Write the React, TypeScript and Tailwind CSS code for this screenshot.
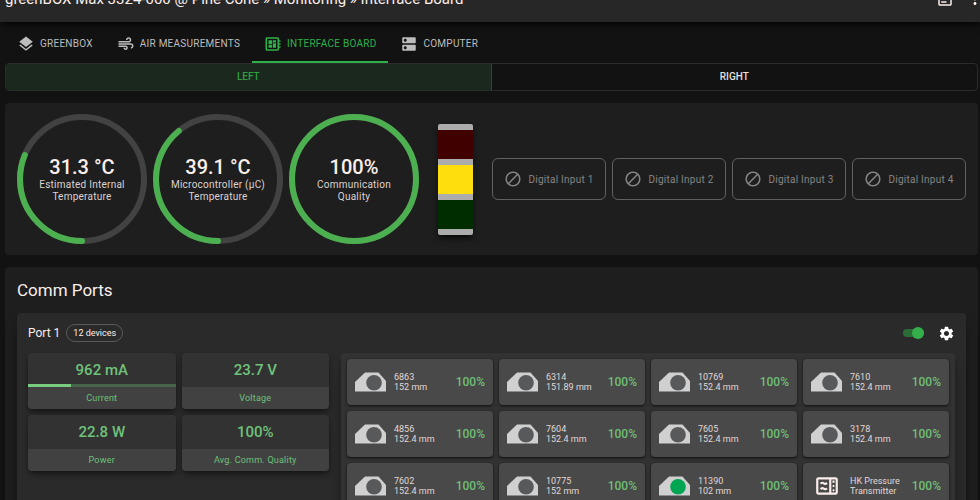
import { type ComponentType, useState } from "react";
import {
  MdAir,
  MdBlock,
  MdDeveloperBoard,
  MdDns,
  MdLayers,
  MdMoreVert,
  MdOutlineArticle,
  MdOutlineMicrowave,
  MdSettings,
} from "react-icons/md";

const tabs: { label: string; icon: ComponentType<{ className?: string }>; active?: boolean }[] = [
  { label: "GREENBOX", icon: MdLayers },
  { label: "AIR MEASUREMENTS", icon: MdAir },
  { label: "INTERFACE BOARD", icon: MdDeveloperBoard, active: true },
  { label: "COMPUTER", icon: MdDns },
];

const gauges = [
  { value: "31.3 °C", label: "Estimated Internal Temperature", percent: 31.3 },
  { value: "39.1 °C", label: "Microcontroller (µC) Temperature", percent: 39.1 },
  { value: "100%", label: "Communication Quality", percent: 100 },
];

const digitalInputs = ["Digital Input 1", "Digital Input 2", "Digital Input 3", "Digital Input 4"];

const stats = [
  { value: "962 mA", label: "Current", progress: 29 },
  { value: "23.7 V", label: "Voltage" },
  { value: "22.8 W", label: "Power" },
  { value: "100%", label: "Avg. Comm. Quality" },
];

const devices = [
  { name: "6863", detail: "152 mm" },
  { name: "6314", detail: "151.89 mm" },
  { name: "10769", detail: "152.4 mm" },
  { name: "7610", detail: "152.4 mm" },
  { name: "4856", detail: "152.4 mm" },
  { name: "7604", detail: "152.4 mm" },
  { name: "7605", detail: "152.4 mm" },
  { name: "3178", detail: "152.4 mm" },
  { name: "7602", detail: "152.4 mm" },
  { name: "10775", detail: "152 mm" },
  { name: "11390", detail: "102 mm", open: true },
  { name: "HK Pressure", detail: "Transmitter", transmitter: true },
];

function Gauge({ value, label, percent }: { value: string; label: string; percent: number }) {
  return (
    <div className="grid size-[130px] shrink-0 place-items-center">
      <svg viewBox="0 0 130 130" className="col-start-1 row-start-1 size-full">
        <circle cx="65" cy="65" r="62" fill="none" stroke="#424242" strokeWidth="6" />
        <circle
          cx="65"
          cy="65"
          r="62"
          fill="none"
          stroke="#4caf50"
          strokeWidth="6"
          strokeLinecap="round"
          pathLength="100"
          strokeDasharray={`${percent} 100`}
          transform="rotate(90 65 65)"
        />
      </svg>
      <div className="col-start-1 row-start-1 w-[100px] text-center">
        <div className="text-xl leading-6 font-medium">{value}</div>
        <div className="text-[10px] leading-3 tracking-wide text-[#ddd2d0]">{label}</div>
      </div>
    </div>
  );
}

function StackLight() {
  return (
    <div className="flex w-[35px] shrink-0 flex-col overflow-hidden rounded-xs shadow-md shadow-black/60">
      <div className="h-1.5 bg-[#acacac]" />
      <div className="h-[29px] bg-[#400000]" />
      <div className="h-1.5 bg-[#acacac]" />
      <div className="h-[29px] bg-[#ffde0d]" />
      <div className="h-1.5 bg-[#acacac]" />
      <div className="h-[29px] bg-[#002d00]" />
      <div className="h-1.5 bg-[#acacac]" />
    </div>
  );
}

function ValveIcon({ open }: { open?: boolean }) {
  return (
    <svg viewBox="0 0 31 20" className="h-5 w-[31px] shrink-0">
      <path d="M0 19.5V10L10 .5h13.500L31 9v10.500z" fill="#d0d0d0" />
      <circle cx="19" cy="10.700" r="7.800" fill={open ? "#00a651" : "#58595b"} />
    </svg>
  );
}

export default function App() {
  const [enabled, setEnabled] = useState(true);

  return (
    <main className="h-screen overflow-hidden bg-[#121212] font-[Roboto,sans-serif] text-[#fbeeeb]">
      {/* App bar */}
      <header className="-mt-6 flex h-[46px] items-center justify-between bg-[#272727] pl-[5px] shadow-md shadow-black/50">
        <h1 className="text-[15px] whitespace-nowrap">
          greenBOX Max 3324-000 @ Pine Cone » Monitoring » Interface Board
        </h1>
        <div className="-mr-1 flex items-center gap-3">
          <button aria-label="Log">
            <MdOutlineArticle className="size-[18px]" />
          </button>
          <button aria-label="More">
            <MdMoreVert className="size-[18px]" />
          </button>
        </div>
      </header>

      {/* Tabs */}
      <nav className="flex h-[41px] px-[5px]">
        {tabs.map(({ label, icon: Icon, active }) => (
          <a
            key={label}
            href="#"
            className={`flex items-center gap-[5px] border-b-2 px-3 pt-1 text-[10px] tracking-wide ${
              active ? "border-[#2eb04a] text-[#2eb04a]" : "border-transparent text-[#bdbdbd]"
            }`}
          >
            <Icon className="size-[18px]" />
            {label}
          </a>
        ))}
      </nav>

      <div className="px-[5px] pr-0.5">
        <div className="grid h-7 grid-cols-2 overflow-hidden rounded-sm border border-[#292d29] text-[10px] font-medium">
          <button className="border-r border-[#2b4a30] bg-[#1b281d] pb-0.5 text-[#2e9e41]">LEFT</button>
          <button className="pb-0.5 text-[#e6e0de]">RIGHT</button>
        </div>

        {/* Overview */}
        <section className="mt-3 flex h-[152px] items-center justify-between rounded-sm bg-[#1e1e1e] px-3">
          <div className="flex gap-1.5">
            {gauges.map((gauge) => (
              <Gauge key={gauge.label} {...gauge} />
            ))}
          </div>
          <StackLight />
          <div className="flex gap-1.5">
            {digitalInputs.map((input) => (
              <div
                key={input}
                className="flex h-[42px] w-[114px] items-center justify-center gap-1.5 rounded-md border border-[#616161] text-[10px] tracking-wide text-[#858585]"
              >
                <MdBlock className="size-[18px]" />
                {input}
              </div>
            ))}
          </div>
        </section>

        {/* Comm ports */}
        <section className="mt-3 rounded-sm bg-[#1e1e1e] px-3 py-[11px]">
          <h2 className="text-[17px] leading-6">Comm Ports</h2>
          <div className="mt-[11px] rounded-sm bg-[#2a2a2a] p-[11px] shadow-lg shadow-black/40">
            <div className="flex items-center gap-1.5">
              <h3 className="text-xs">Port 1</h3>
              <span className="rounded-full border border-[#5a5a5a] px-1.5 text-[9px] leading-4">12 devices</span>
              <label className="ml-auto flex h-3 w-[21px] items-center">
                <input
                  type="checkbox"
                  role="switch"
                  aria-label="Port 1 enabled"
                  checked={enabled}
                  onChange={(e) => setEnabled(e.target.checked)}
                  className="peer sr-only"
                />
                <span className="flex h-2 w-full items-center rounded-full bg-[#555] peer-checked:justify-end peer-checked:bg-[#2b6d37]">
                  <span className={`size-3 rounded-full ${enabled ? "bg-[#35af4b]" : "bg-[#bdbdbd]"}`} />
                </span>
              </label>
              <button aria-label="Port 1 settings" className="ml-2 text-white">
                <MdSettings className="size-[17px]" />
              </button>
            </div>

            <div className="mt-[11px] grid grid-cols-3 items-start gap-3">
              <div className="grid grid-cols-2 gap-1.5">
                {stats.map((stat) => (
                  <div
                    key={stat.label}
                    className="overflow-hidden rounded-sm bg-[#323232] text-center text-[#6ec27a] shadow-md shadow-black/40"
                  >
                    <div className="relative text-[15px] leading-[34px] font-medium">
                      {stat.value}
                      {stat.progress && (
                        <div className="absolute inset-x-0 bottom-0 h-[3px] bg-[#46654a]">
                          <div className="h-full bg-[#78cc80]" style={{ width: `${stat.progress}%` }} />
                        </div>
                      )}
                    </div>
                    <div className="bg-[#414141] text-[9px] leading-[22px] tracking-wide">{stat.label}</div>
                  </div>
                ))}
              </div>

              <div className="col-span-2 grid grid-cols-4 gap-1.5 rounded-sm bg-[#323232] p-1.5 shadow-lg shadow-black/40">
                {devices.map((device) => (
                  <div
                    key={device.name}
                    className="flex h-[46px] items-center rounded-sm bg-[#494949] px-2 text-[9px] leading-[10px] shadow-sm shadow-black/60"
                  >
                    {device.transmitter ? (
                      <span className="flex w-[31px] justify-center">
                        <MdOutlineMicrowave className="size-[26px]" />
                      </span>
                    ) : (
                      <ValveIcon open={device.open} />
                    )}
                    <div className="ml-2 whitespace-nowrap text-[#e2d8d6]">
                      <div>{device.name}</div>
                      <div>{device.detail}</div>
                    </div>
                    <div className="ml-auto text-xs font-medium text-[#6ebf76]">100%</div>
                  </div>
                ))}
              </div>
            </div>
          </div>
        </section>
      </div>
    </main>
  );
}
